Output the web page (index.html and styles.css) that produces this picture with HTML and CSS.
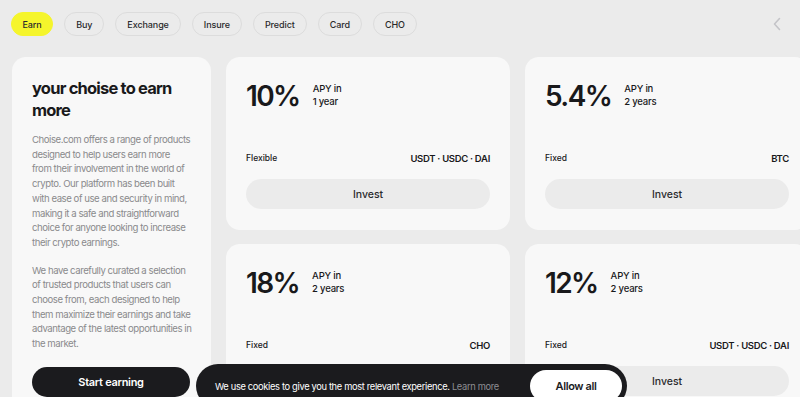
FILE: index.html
```html
<!DOCTYPE html>
<html lang="en">
<head>
<meta charset="utf-8">
<title>Earn</title>
<link rel="stylesheet" href="styles.css">
</head>
<body>
<nav class="tabs">
  <span class="pill pill-active">Earn</span>
  <span class="pill">Buy</span>
  <span class="pill">Exchange</span>
  <span class="pill">Insure</span>
  <span class="pill">Predict</span>
  <span class="pill">Card</span>
  <span class="pill">CHO</span>
  <span class="chev"><svg width="10" height="14" viewBox="0 0 10 14"><path d="M7.5 1.5 L2.5 7 L7.5 12.5" fill="none" stroke="#c4c4c8" stroke-width="1.6" stroke-linecap="round" stroke-linejoin="round"/></svg></span>
</nav>
<main class="grid">
  <section class="intro">
    <h1 class="intro-title">your choise to earn more</h1>
    <p class="intro-text">Choise.com offers a range of products designed to help users earn more from their involvement in the world of crypto. Our platform has been built with ease of use and security in mind, making it a safe and straightforward choice for anyone looking to increase their crypto earnings.</p>
    <p class="intro-text">We have carefully curated a selection of trusted products that users can choose from, each designed to help them maximize their earnings and take advantage of the latest opportunities in the market.</p>
    <button class="start-btn">Start earning</button>
  </section>
  <article class="card">
    <div class="rate-row"><span class="rate">10%</span><span class="apy">APY in<br>1 year</span></div>
    <div class="meta"><span class="kind">Flexible</span><span class="coins">USDT · USDC · DAI</span></div>
    <button class="invest">Invest</button>
  </article>
  <article class="card">
    <div class="rate-row"><span class="rate">5.4%</span><span class="apy">APY in<br>2 years</span></div>
    <div class="meta"><span class="kind">Fixed</span><span class="coins">BTC</span></div>
    <button class="invest">Invest</button>
  </article>
  <article class="card">
    <div class="rate-row"><span class="rate">18%</span><span class="apy">APY in<br>2 years</span></div>
    <div class="meta"><span class="kind">Fixed</span><span class="coins">CHO</span></div>
    <button class="invest">Invest</button>
  </article>
  <article class="card">
    <div class="rate-row"><span class="rate">12%</span><span class="apy">APY in<br>2 years</span></div>
    <div class="meta"><span class="kind">Fixed</span><span class="coins">USDT · USDC · DAI</span></div>
    <button class="invest">Invest</button>
  </article>
</main>
<div class="cookie">
  <p class="cookie-text">We use cookies to give you the most relevant experience. <span class="cookie-link">Learn more</span></p>
  <button class="allow">Allow all</button>
</div>
</body>
</html>
```
FILE: styles.css
```css
* { box-sizing: border-box; }
html, body { margin: 0; padding: 0; }
body {
  width: 800px;
  height: 397px;
  overflow: hidden;
  background: #ebebeb;
  font-family: Inter, "Noto Sans", sans-serif;
  color: #19191b;
}
.tabs {
  display: flex;
  align-items: center;
  gap: 11px;
  padding: 12px 11px 0 11px;
  height: 36px;
}
.pill {
  height: 24px;
  display: inline-flex;
  align-items: center;
  padding: 0 11px;
  border: 1px solid #dcdcdc;
  border-radius: 12px;
  font-size: 9px;
  letter-spacing: -0.1px;
  font-weight: 500;
  color: #2a2a2c;
}
.pill-active {
  background: #f5f52c;
  border-color: #f5f52c;
  padding: 0 10.5px;
}
.chev {
  margin-left: auto;
  margin-right: 7px;
  display: flex;
}
.grid {
  display: grid;
  grid-template-columns: 199px 284px 284px;
  grid-template-rows: 173px 173px;
  column-gap: 15px;
  row-gap: 14px;
  margin: 21px 0 0 12px;
}
.intro {
  grid-row: span 2;
  background: #f8f8f8;
  border-radius: 14px;
  padding: 20px 19.5px 20px 20px;
}
.intro-title {
  margin: 0;
  font-size: 16.5px;
  line-height: 22px;
  font-weight: 700;
  letter-spacing: -0.8px;
}
.intro-text {
  margin: 12px 0 0;
  font-size: 9.6px;
  line-height: 14.7px;
  letter-spacing: -0.45px;
  color: #8a8a8c;
}
.intro-text + .intro-text { margin-top: 13px; }
.start-btn {
  margin-top: 15px;
  width: 158px;
  height: 30px;
  border: 0;
  border-radius: 15px;
  background: #1b1b1e;
  color: #fff;
  font-family: inherit;
  font-size: 11px;
  letter-spacing: -0.3px;
  font-weight: 600;
}
.card {
  background: #f8f8f8;
  border-radius: 14px;
  padding: 20px 20px 21px;
  display: flex;
  flex-direction: column;
}
.rate-row {
  display: flex;
  align-items: flex-start;
  gap: 13px;
}
.rate {
  font-size: 28px;
  line-height: 38px;
  font-weight: 600;
  letter-spacing: -1.6px;
}
.apy {
  margin-top: 5px;
  font-size: 9.5px;
  line-height: 13px;
  letter-spacing: -0.2px;
  font-weight: 500;
}
.meta {
  margin-top: auto;
  margin-bottom: 14px;
  display: flex;
  justify-content: space-between;
  align-items: center;
  height: 14px;
}
.kind { font-size: 8.5px; font-weight: 500; }
.coins { font-size: 9.5px; font-weight: 600; letter-spacing: -0.3px; }
.invest {
  height: 30px;
  width: 100%;
  border: 0;
  border-radius: 15px;
  background: #ebebeb;
  color: #2a2a2c;
  font-family: inherit;
  font-size: 10.5px;
  font-weight: 500;
}
.cookie {
  position: fixed;
  left: 196px;
  top: 364px;
  width: 431px;
  height: 44px;
  background: #1b1b1e;
  border-radius: 22px;
  display: flex;
  align-items: center;
  justify-content: space-between;
  padding: 0 5px 0 19px;
}
.cookie-text {
  margin: 0;
  font-size: 9.3px;
  color: #fff;
  letter-spacing: -0.33px;
}
.cookie-link { color: #8d8d92; }
.allow {
  width: 92px;
  height: 32px;
  border: 0;
  border-radius: 16px;
  background: #fff;
  color: #1b1b1e;
  font-family: inherit;
  font-size: 11px;
  letter-spacing: -0.4px;
  font-weight: 600;
}
```
